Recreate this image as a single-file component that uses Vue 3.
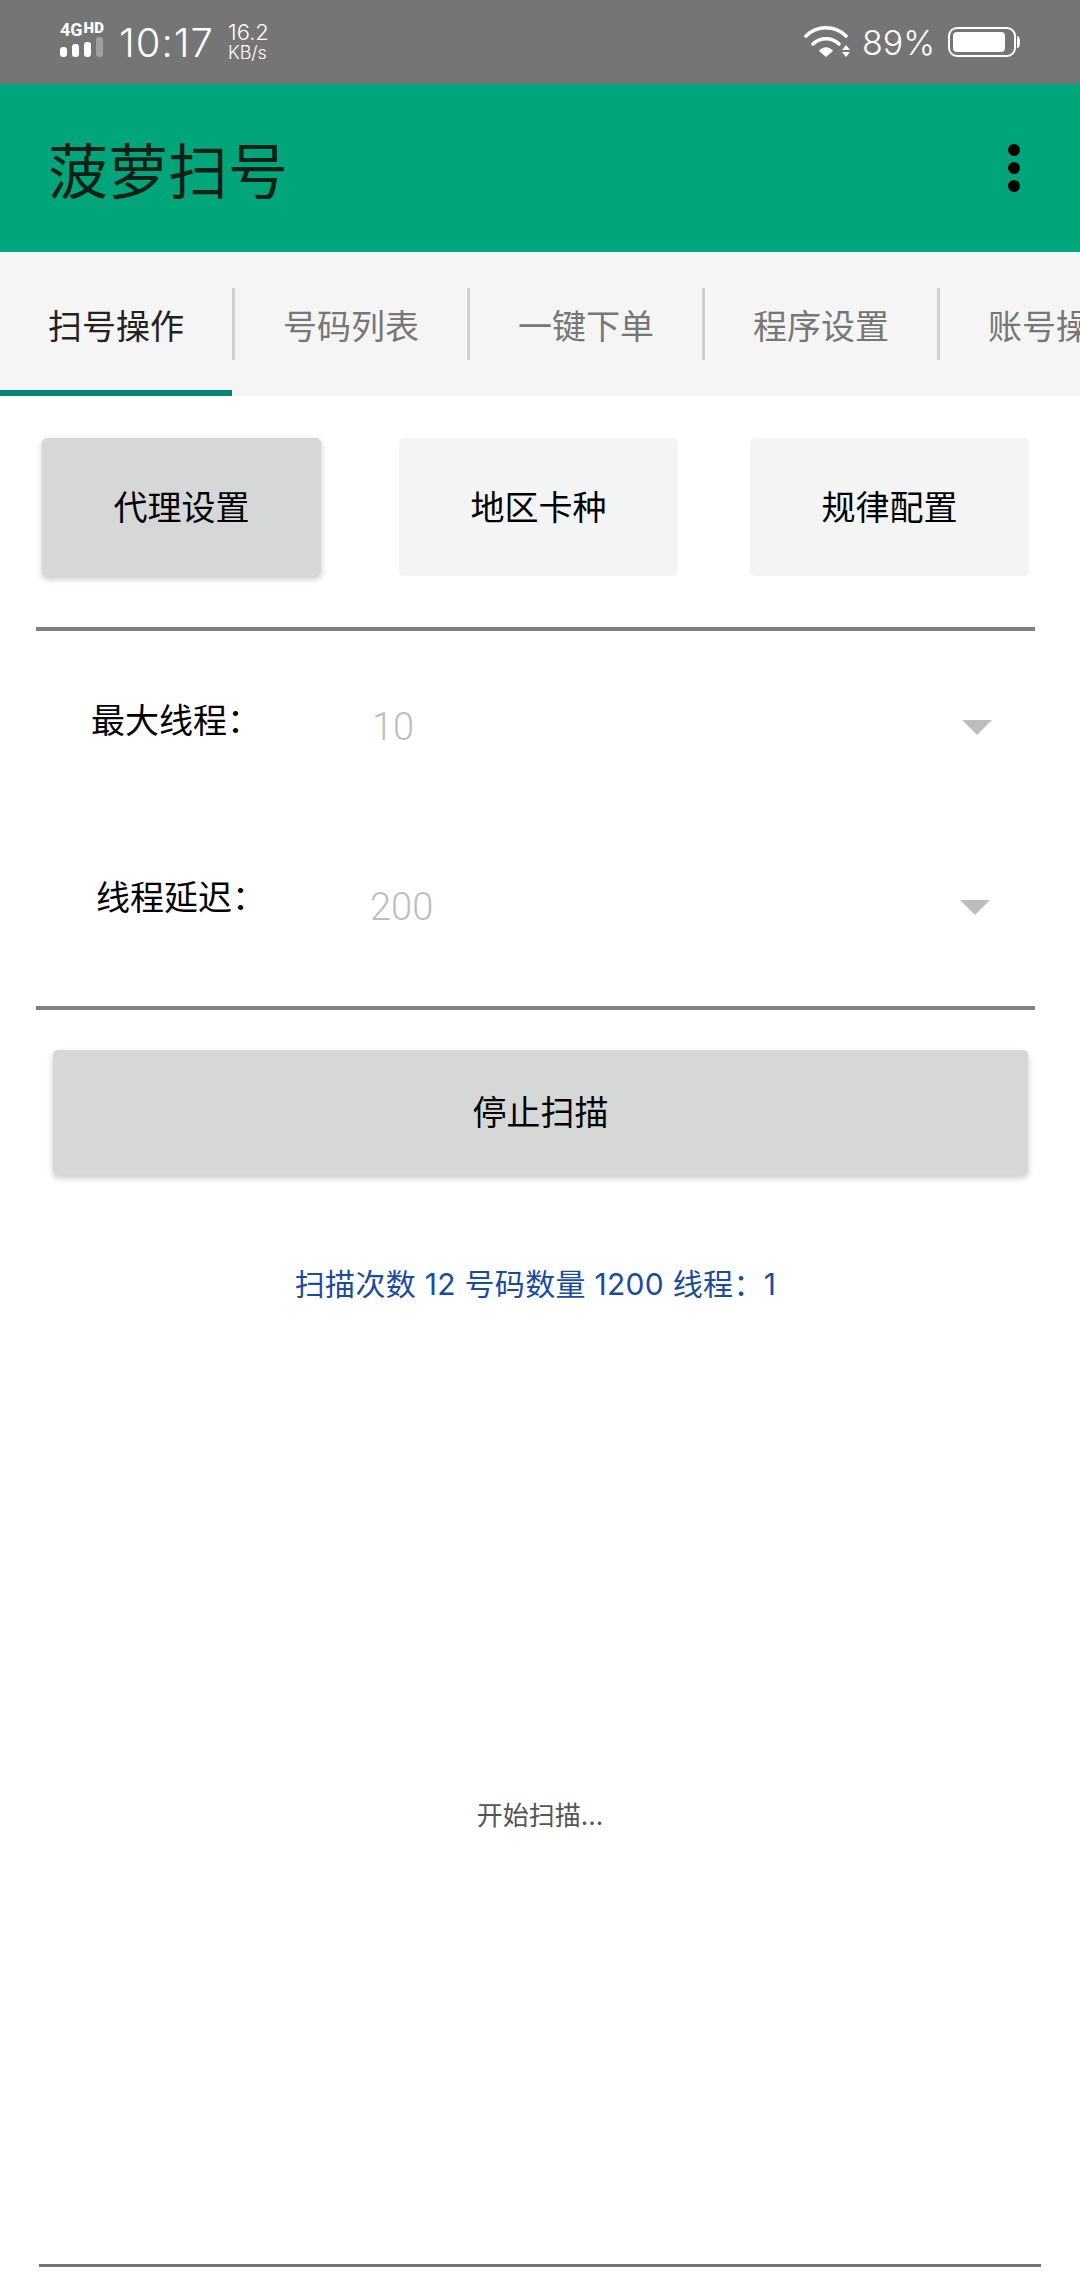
<script setup>
const tabs = ['扫号操作', '号码列表', '一键下单', '程序设置', '账号操作']
const bars = [10, 13, 15, 20]
</script>

<template>
  <div class="app">
    <div class="statusBar">
      <div class="signal">
        <div class="netType"><span class="net4g">4G</span><span class="netHd">HD</span></div>
        <div class="bars">
          <i v-for="(h, i) in bars" :key="i" :class="{ dim: i === 3 }" :style="{ height: h + 'px' }"></i>
        </div>
      </div>
      <span class="time">10:17</span>
      <div class="speed">
        <span class="speedNum">16.2</span>
        <span class="speedUnit">KB/s</span>
      </div>
      <svg class="wifi" width="46" height="36" viewBox="0 0 46 36">
        <path d="M2 12 C13 1 31 1 42 12" fill="none" stroke="#fff" stroke-width="3.6" stroke-linecap="round" />
        <path d="M9 20 C16 13 28 13 35 20" fill="none" stroke="#fff" stroke-width="3.6" stroke-linecap="round" />
        <path d="M15 27 C19 22 25 22 29 27 L22 33 Z" fill="#fff" />
        <path d="M42 21 L46 26 L38 26 Z M38 28 L46 28 L42 33 Z" fill="#fff" />
      </svg>
      <span class="battery">89%</span>
      <svg class="batteryIcon" width="72" height="32" viewBox="0 0 72 32">
        <rect x="1" y="2" width="66" height="28" rx="8" fill="none" stroke="#fff" stroke-width="2" />
        <rect x="5" y="6" width="52" height="20" rx="4" fill="#fff" />
        <path d="M69 10 C71 10 72 12 72 16 C72 20 71 22 69 22 Z" fill="#fff" />
      </svg>
    </div>

    <div class="appBar">
      <span class="title">菠萝扫号</span>
      <div class="menu"><i></i><i></i><i></i></div>
    </div>

    <div class="tabs">
      <template v-for="(tab, i) in tabs" :key="tab">
        <div class="tab" :class="{ active: i === 0 }">{{ tab }}</div>
        <div class="sep"></div>
      </template>
    </div>

    <div class="btnRow">
      <button class="btn raised">代理设置</button>
      <button class="btn flat second">地区卡种</button>
      <button class="btn flat third">规律配置</button>
    </div>

    <div class="rule"></div>

    <div class="formRow first">
      <span class="label">最大线程：</span>
      <span class="value">10</span>
      <span class="arrow"></span>
    </div>
    <div class="formRow next">
      <span class="label">线程延迟：</span>
      <span class="value">200</span>
      <span class="arrow"></span>
    </div>

    <div class="rule low"></div>

    <button class="btn raised stop">停止扫描</button>

    <p class="count">扫描次数 12 号码数量 1200 线程：1</p>
    <p class="log">开始扫描...</p>

    <div class="bottomLine"></div>
  </div>
</template>

<style scoped>
.app {
  width: 1080px;
  height: 2280px;
  overflow: hidden;
  background: #fff;
  font-family: Roboto, "Noto Sans CJK SC", sans-serif;
}

.statusBar {
  height: 84px;
  background: #757575;
  color: #fff;
  display: flex;
  align-items: center;
  padding-left: 60px;
  box-sizing: border-box;
  font-family: Inter, Roboto, sans-serif;
}
.signal {
  width: 46px;
  display: flex;
  flex-direction: column;
  margin-bottom: 4px;
}
.netType {
  display: flex;
  align-items: flex-start;
  height: 14px;
  line-height: 14px;
}
.net4g {
  font-size: 18px;
  font-weight: 700;
  font-family: Roboto, sans-serif;
}
.netHd {
  font-size: 15px;
  line-height: 10px;
  font-weight: 900;
  margin-left: 1px;
  font-family: Roboto, sans-serif;
}
.bars {
  display: flex;
  align-items: flex-end;
  gap: 5px;
  height: 20px;
}
.bars i {
  width: 7px;
  border-radius: 3px;
  background: #fff;
}
.bars i.dim {
  background: #a0a0a0;
}
.time {
  font-size: 40px;
  font-weight: 300;
  letter-spacing: 1px;
  margin-left: 13px;
  width: 96px;
}
.speed {
  display: flex;
  flex-direction: column;
  margin-left: 13px;
}
.speedNum {
  font-size: 22px;
  line-height: 21px;
  font-weight: 300;
}
.speedUnit {
  font-size: 18px;
  line-height: 19px;
  font-weight: 300;
}
.wifi {
  margin-left: auto;
}
.battery {
  font-size: 34px;
  font-weight: 300;
  margin-left: 12px;
}
.batteryIcon {
  margin-left: 13px;
  margin-right: 60px;
}

.appBar {
  height: 168px;
  background: #00a67a;
  display: flex;
  align-items: center;
  justify-content: space-between;
  padding: 0 60px 0 48px;
}
.title {
  font-size: 60px;
  color: #0a2018;
  margin-bottom: 2px;
}
.menu {
  display: flex;
  flex-direction: column;
  gap: 6px;
}
.menu i {
  width: 12px;
  height: 12px;
  border-radius: 50%;
  background: #000;
}

.tabs {
  height: 144px;
  background: #f5f5f5;
  display: flex;
  align-items: center;
  overflow: hidden;
}
.tab {
  flex: none;
  width: 232px;
  height: 144px;
  box-sizing: border-box;
  display: flex;
  align-items: center;
  justify-content: center;
  font-size: 34px;
  color: #777;
}
.tab.active {
  color: #222;
  box-shadow: inset 0 -6px 0 #00857a;
}
.sep {
  flex: none;
  width: 3px;
  height: 72px;
  background: #d0d0d0;
}

.btnRow {
  display: flex;
  margin: 42px 0 0 42px;
}
.btn {
  width: 279px;
  height: 138px;
  border: none;
  border-radius: 5px;
  font-family: inherit;
  font-size: 34px;
  color: #000;
  padding: 0 0 3px;
}
.raised {
  background: #d6d8d8;
  box-shadow: 0 3px 6px rgba(0, 0, 0, 0.22);
}
.flat {
  background: #f3f5f5;
}
.second {
  margin-left: 78px;
}
.third {
  margin-left: 72px;
}

.rule {
  height: 4px;
  margin: 51px 45px 0 36px;
  background: #808080;
}
.rule.low {
  margin-top: 9px;
}

.formRow {
  height: 180px;
  display: flex;
  align-items: center;
}
.formRow.first {
  margin-top: 6px;
  padding: 0 88px 0 91px;
}
.formRow.next {
  padding: 0 90px 0 96px;
}
.label {
  font-size: 34px;
  color: #000;
}
.first .label {
  width: 281px;
  margin-bottom: 18px;
}
.next .label {
  width: 274px;
  margin-bottom: 24px;
}
.value {
  font-size: 38px;
  font-weight: 300;
  color: #bdbdbd;
}
.arrow {
  margin-left: auto;
  width: 0;
  height: 0;
  border-left: 15px solid transparent;
  border-right: 15px solid transparent;
  border-top: 15px solid #bdbdbd;
}

.stop {
  display: block;
  width: 975px;
  height: 125px;
  margin: 40px 0 0 53px;
  padding-bottom: 4px;
}

.count {
  height: 40px;
  line-height: 40px;
  margin: 89px 0 0;
  padding-right: 9px;
  text-align: center;
  font-family: Inter, "Noto Sans CJK SC", sans-serif;
  font-size: 30px;
  letter-spacing: 0.3px;
  color: #1a4ba0;
}
.log {
  height: 36px;
  line-height: 36px;
  margin: 494px 0 0;
  text-align: center;
  font-family: Inter, "Noto Sans CJK SC", sans-serif;
  font-size: 26px;
  color: #555;
}
.bottomLine {
  height: 3px;
  margin: 430px 39px 0;
  background: #757575;
}
</style>
